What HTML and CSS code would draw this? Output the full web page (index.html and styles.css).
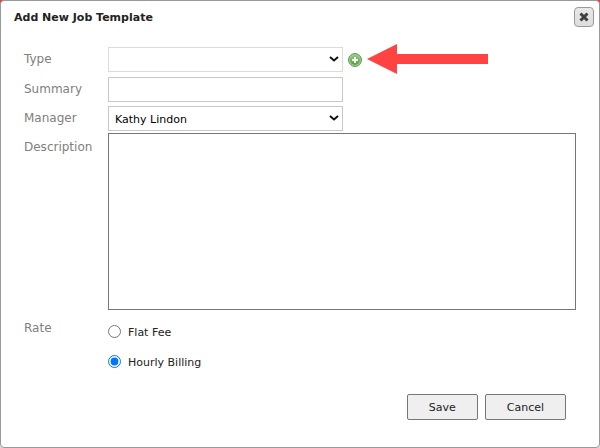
FILE: index.html
```html
<!DOCTYPE html>
<html lang="en">
<head>
  <meta charset="UTF-8">
  <meta name="viewport" content="width=device-width, initial-scale=1.0">
  <title>Add New Job Template</title>
  <link rel="stylesheet" href="styles.css">
</head>
<body>
  <form class="dialog">
    <div class="header">
      <h1>Add New Job Template</h1>
      <button type="button" class="close" aria-label="Close">
        <svg width="10" height="10" viewBox="0 0 10 10"><path d="M1.5 1.5L8.5 8.5M8.5 1.5L1.5 8.5" stroke="#404040" stroke-width="3"/></svg>
      </button>
    </div>

    <div class="fields">
      <div class="row row-type">
        <label for="type">Type</label>
        <div class="control">
          <span class="select">
            <select id="type" class="field light"><option></option></select>
            <svg class="chevron" width="10" height="6" viewBox="0 0 10 6"><path d="M1 1L5 4.5L9 1" fill="none" stroke="#111" stroke-width="2"/></svg>
          </span>
          <button type="button" class="add" aria-label="Add type">
            <svg width="14" height="14" viewBox="0 0 14 14">
              <defs>
                <linearGradient id="green" x1="0" y1="0" x2="0" y2="1">
                  <stop offset="0" stop-color="#8fcd78"/>
                  <stop offset="1" stop-color="#4fa238"/>
                </linearGradient>
              </defs>
              <circle cx="7" cy="7" r="6.4" fill="#a9d69a" stroke="#4d8f40"/>
              <circle cx="7" cy="7" r="5" fill="url(#green)"/>
              <path d="M7 4V10M4 7H10" stroke="#fff" stroke-width="2"/>
            </svg>
          </button>
          <svg class="arrow" width="121" height="30" viewBox="0 0 121 30"><path d="M0 15L30 0V10H121V20H30V30Z" fill="#ff4242"/></svg>
        </div>
      </div>

      <div class="row">
        <label for="summary">Summary</label>
        <div class="control"><input type="text" id="summary" class="field"></div>
      </div>

      <div class="row row-manager">
        <label for="manager">Manager</label>
        <div class="control">
          <span class="select">
            <select id="manager" class="field"><option>Kathy Lindon</option></select>
            <svg class="chevron" width="10" height="6" viewBox="0 0 10 6"><path d="M1 1L5 4.5L9 1" fill="none" stroke="#111" stroke-width="2"/></svg>
          </span>
        </div>
      </div>

      <div class="row row-description">
        <label for="description">Description</label>
        <textarea id="description"></textarea>
      </div>

      <div class="row row-rate" role="radiogroup" aria-labelledby="rate">
        <span class="label" id="rate">Rate</span>
        <div class="options">
          <label class="option"><input type="radio" name="rate"><span>Flat Fee</span></label>
          <label class="option"><input type="radio" name="rate" checked><span>Hourly Billing</span></label>
        </div>
      </div>
    </div>

    <div class="footer">
      <button type="button" class="btn">Save</button>
      <button type="button" class="btn">Cancel</button>
    </div>
  </form>
</body>
</html>
```

FILE: styles.css
```css
* { box-sizing: border-box; }
body { margin: 0; background: linear-gradient(#e23b3b 50%, #ddd 50%); font-family: Verdana, "DejaVu Sans", sans-serif; font-size: 11px; color: #222; }
.dialog { min-height: 100vh; background: #fff; border: 1px solid #999; border-radius: 4px; }
button, input, select, textarea { font: inherit; margin: 0; }

.header { display: flex; justify-content: space-between; padding: 6px 5px 0 13px; }
h1 { margin: 0; font-size: 11px; line-height: 21px; font-weight: bold; }
.close { display: flex; align-items: center; justify-content: center; width: 20px; height: 20px; padding: 0; border: 1px solid #999; border-radius: 4px; background: linear-gradient(#e8e8e8, #dcdcdc); }

.fields { padding: 19px 23px 0; }
.row { display: flex; padding-bottom: 4px; }
.row > label, .label { flex: none; width: 84px; font-size: 12px; line-height: 25px; color: #808080; }
.row-type { padding-bottom: 5px; }
.row-manager { padding-bottom: 2px; }
.row-description > label, .label { line-height: 28px; }

.control { display: flex; align-items: center; }
.field { display: block; width: 235px; height: 25px; padding: 2px 6px 0; border: 1px solid #c8c8c8; border-radius: 0; background: #fff; color: #000; }
.light { border-color: #dcdcdc; }
.select { position: relative; }
.select select { appearance: none; }
.chevron { position: absolute; right: 4px; top: 9px; pointer-events: none; }
.add { width: 14px; height: 14px; margin-left: 5px; padding: 0; border: 0; background: none; }
.add svg { display: block; }
.arrow { flex: none; margin: -4px 0 -2px 5px; }

textarea { flex: 1; height: 177px; padding: 4px; border: 1px solid #767676; border-radius: 0; resize: none; }

.options { padding-top: 2px; }
.option { display: flex; align-items: center; height: 30px; }
.option input { width: 13px; height: 13px; margin-right: 7px; }
.option span { padding-top: 2px; }

.footer { display: flex; justify-content: flex-end; gap: 7px; padding: 14px 33px 26px; }
.btn { height: 26px; padding: 0 21px; border: 1px solid #767676; border-radius: 2px; background: #efefef; color: #222; }
```
